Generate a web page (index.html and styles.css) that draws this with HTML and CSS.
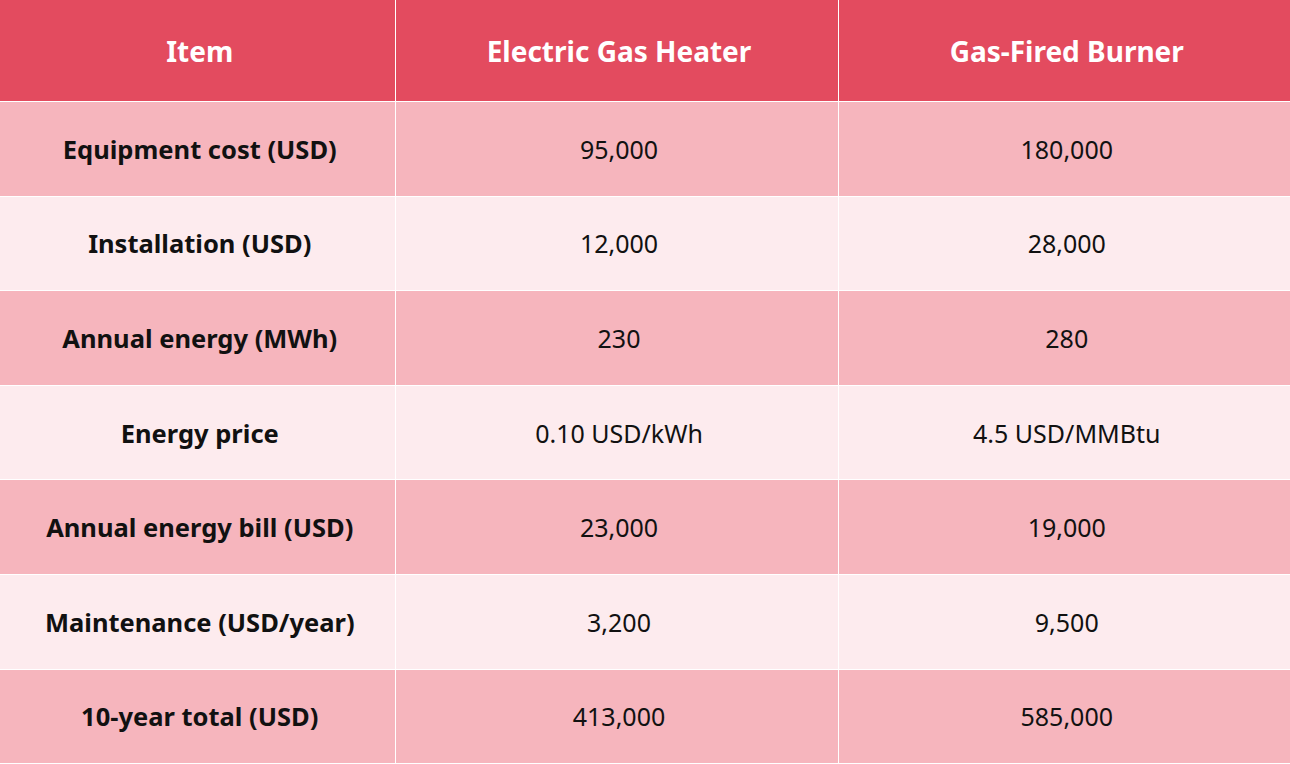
FILE: index.html
```html
<!DOCTYPE html>
<html>
<head>
<meta charset="utf-8">
<link rel="stylesheet" href="styles.css">
</head>
<body>
<table class="cost-table">
  <colgroup>
    <col class="c1"><col class="c2"><col class="c3">
  </colgroup>
  <thead>
    <tr><th>Item</th><th>Electric Gas Heater</th><th>Gas-Fired Burner</th></tr>
  </thead>
  <tbody>
    <tr><td class="label">Equipment cost (USD)</td><td>95,000</td><td>180,000</td></tr>
    <tr><td class="label">Installation (USD)</td><td>12,000</td><td>28,000</td></tr>
    <tr><td class="label">Annual energy (MWh)</td><td>230</td><td>280</td></tr>
    <tr><td class="label">Energy price</td><td>0.10 USD/kWh</td><td>4.5 USD/MMBtu</td></tr>
    <tr><td class="label">Annual energy bill (USD)</td><td>23,000</td><td>19,000</td></tr>
    <tr><td class="label">Maintenance (USD/year)</td><td>3,200</td><td>9,500</td></tr>
    <tr><td class="label">10-year total (USD)</td><td>413,000</td><td>585,000</td></tr>
  </tbody>
</table>
</body>
</html>
```
FILE: styles.css
```css
html, body {
  margin: 0;
  padding: 0;
  background: #ffffff;
}
body {
  font-family: "Noto Sans", "Open Sans", sans-serif;
  color: #111111;
}
.cost-table {
  width: 1290px;
  border-collapse: collapse;
  table-layout: fixed;
}
.c1 { width: 395px; }
.c2 { width: 443px; }
.c3 { width: 452px; }
.cost-table th,
.cost-table td {
  border: 1px solid #ffffff;
  text-align: center;
  vertical-align: middle;
  padding: 0 0 0 5px;
}
.cost-table thead th { border-top: none; }
.cost-table th:first-child,
.cost-table td:first-child { border-left: none; }
.cost-table th:last-child,
.cost-table td:last-child { border-right: none; }
.cost-table thead th {
  height: 101px;
  background: #e34b5f;
  color: #ffffff;
  font-size: 28px;
  font-weight: 700;
}
.cost-table tbody td {
  height: 93.6px;
  font-size: 25px;
  font-weight: 400;
  color: #111111;
}
.cost-table tbody tr:nth-child(odd) td { background: #f6b5bd; }
.cost-table tbody tr:nth-child(even) td { background: #fdebee; }
.cost-table td.label {
  font-size: 25.5px;
  font-weight: 700;
}
```
